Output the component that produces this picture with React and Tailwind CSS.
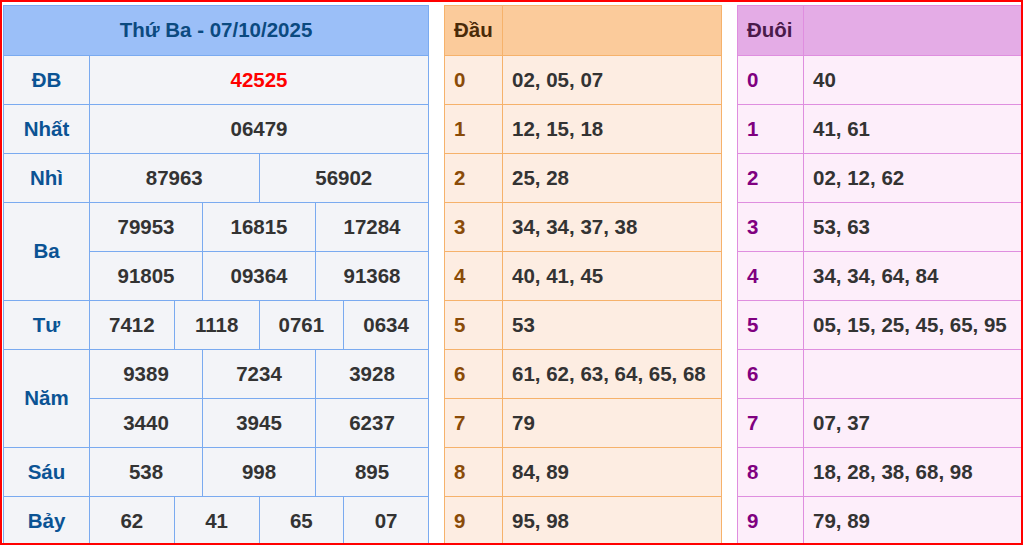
export default function App() {
  const f = { fontFamily: '"Liberation Sans", Arial, sans-serif' };
  const L = "border border-[#7aaaf0] text-center h-[49px]";
  const lab = L + " text-[#0b5394]";
  const num = L + " text-[#333]";
  const cells = (arr, span) => arr.map((v, i) => <td key={i} colSpan={span} className={num}>{v}</td>);
  const dau = [["0","02, 05, 07"],["1","12, 15, 18"],["2","25, 28"],["3","34, 34, 37, 38"],["4","40, 41, 45"],["5","53"],["6","61, 62, 63, 64, 65, 68"],["7","79"],["8","84, 89"],["9","95, 98"]];
  const duoi = [["0","40"],["1","41, 61"],["2","02, 12, 62"],["3","53, 63"],["4","34, 34, 64, 84"],["5","05, 15, 25, 45, 65, 95"],["6",""],["7","07, 37"],["8","18, 28, 38, 68, 98"],["9","79, 89"]];
  return (
    <div style={f} className="w-[1023px] h-[545px] border-2 border-[#ff0000] overflow-hidden flex gap-[15px] pl-px pt-[3px] bg-white text-[20.5px] font-bold">
      <table className="table-fixed border-collapse w-[426px] bg-[#f3f4f8] shrink-0">
        <colgroup>
          <col className="w-[86px]" />
          {Array.from({ length: 12 }).map((_, i) => <col key={i} />)}
        </colgroup>
        <tbody>
          <tr><td colSpan={13} className="border border-[#7aaaf0] bg-[#9bbff8] text-[#0b4a80] text-center h-[50px]">Thứ Ba - 07/10/2025</td></tr>
          <tr><td className={lab}>ĐB</td><td colSpan={12} className={L + " text-[#ff0000]"}>42525</td></tr>
          <tr><td className={lab}>Nhất</td>{cells(["06479"], 12)}</tr>
          <tr><td className={lab}>Nhì</td>{cells(["87963", "56902"], 6)}</tr>
          <tr><td rowSpan={2} className={lab}>Ba</td>{cells(["79953", "16815", "17284"], 4)}</tr>
          <tr>{cells(["91805", "09364", "91368"], 4)}</tr>
          <tr><td className={lab}>Tư</td>{cells(["7412", "1118", "0761", "0634"], 3)}</tr>
          <tr><td rowSpan={2} className={lab}>Năm</td>{cells(["9389", "7234", "3928"], 4)}</tr>
          <tr>{cells(["3440", "3945", "6237"], 4)}</tr>
          <tr><td className={lab}>Sáu</td>{cells(["538", "998", "895"], 4)}</tr>
          <tr><td className={lab}>Bảy</td>{cells(["62", "41", "65", "07"], 3)}</tr>
        </tbody>
      </table>
      <table className="table-fixed border-collapse w-[278px] bg-[#fdede2] shrink-0">
        <colgroup><col className="w-[58px]" /><col /></colgroup>
        <tbody>
          <tr className="bg-[#fbcb9b] h-[50px]">
            <td className="border border-[#f6b26b] px-[9px] text-[#4a2a08]">Đầu</td>
            <td className="border border-[#f6b26b]"></td>
          </tr>
          {dau.map(([a, b]) => (
            <tr key={a} className="h-[49px]">
              <td className="border border-[#f6b26b] px-[9px] text-[#8a4b08]">{a}</td>
              <td className="border border-[#f6b26b] px-[9px] text-[#333] whitespace-nowrap">{b}</td>
            </tr>
          ))}
        </tbody>
      </table>
      <table className="table-fixed border-collapse w-[285px] bg-[#fdeefa] shrink-0">
        <colgroup><col className="w-[66px]" /><col /></colgroup>
        <tbody>
          <tr className="bg-[#e4ace6] h-[50px]">
            <td className="border border-[#df8edf] px-[9px] text-[#4a1a4a]">Đuôi</td>
            <td className="border border-[#df8edf]"></td>
          </tr>
          {duoi.map(([a, b]) => (
            <tr key={a} className="h-[49px]">
              <td className="border border-[#df8edf] px-[9px] text-[#800080]">{a}</td>
              <td className="border border-[#df8edf] px-[9px] text-[#333] whitespace-nowrap">{b}</td>
            </tr>
          ))}
        </tbody>
      </table>
    </div>
  );
}
